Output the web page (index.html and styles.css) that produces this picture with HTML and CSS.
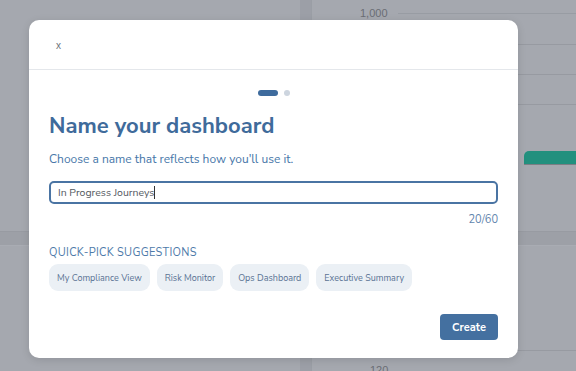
FILE: index.html
```html
<!DOCTYPE html>
<html>
<head>
<meta charset="utf-8">
<link rel="stylesheet" href="styles.css">
</head>
<body>
<div class="page">
  <div class="col-left">
    <div class="panel-top"></div>
    <div class="band"></div>
    <div class="panel-bottom"></div>
  </div>
  <div class="gutter"></div>
  <div class="col-right">
    <div class="panel-top chart">
      <div class="axis-row"><span class="axis-label">1,000</span><span class="axis-line"></span></div>
      <div class="grid-line l1"></div>
      <div class="grid-line l2"></div>
      <div class="grid-line l3"></div>
      <div class="bar"></div>
    </div>
    <div class="band"></div>
    <div class="panel-bottom chart2">
      <div class="grid-line l4"></div>
      <span class="axis-label small">120</span>
    </div>
  </div>
</div>
<div class="overlay">
  <div class="modal">
    <div class="modal-header"><span class="close">x</span></div>
    <div class="modal-body">
      <div class="steps"><span class="step active"></span><span class="step"></span></div>
      <h1 class="title">Name your dashboard</h1>
      <p class="subtitle">Choose a name that reflects how you'll use it.</p>
      <div class="input"><span class="input-text">In Progress Journeys</span><span class="caret"></span></div>
      <div class="counter">20/60</div>
      <div class="section-label">QUICK-PICK SUGGESTIONS</div>
      <div class="chips">
        <span class="chip">My Compliance View</span>
        <span class="chip">Risk Monitor</span>
        <span class="chip">Ops Dashboard</span>
        <span class="chip">Executive Summary</span>
      </div>
      <div class="actions"><button class="btn-create">Create</button></div>
    </div>
  </div>
</div>
</body>
</html>
```

FILE: styles.css
```css
* { box-sizing: border-box; }
html, body { margin: 0; padding: 0; }
body {
  width: 576px;
  height: 371px;
  overflow: hidden;
  position: relative;
  font-family: "Nunito Sans", "Lato", "Open Sans", sans-serif;
  background: #a4a7ae;
}
.page {
  display: flex;
  width: 576px;
  height: 371px;
}
.col-left { width: 300px; display: flex; flex-direction: column; }
.col-right { flex: 1; display: flex; flex-direction: column; border-left: 1px solid #9a9ea5; }
.gutter { width: 11px; background: #9c9fa7; }
.panel-top { height: 231px; background: #a5a8af; position: relative; }
.band { height: 14px; background: #9da0a7; border-top: 1px solid #989ba2; }
.panel-bottom { flex: 1; background: #a5a8af; position: relative; border-top: 1px solid #a9acb3; }
.chart .axis-row { display: flex; align-items: center; gap: 10px; padding: 7px 0 0 48px; }
.axis-label { font-family: "Liberation Sans", Arial, sans-serif; font-size: 11px; color: #6b6e75; }
.axis-line { flex: 1; height: 1px; background: #989ca3; }
.grid-line { position: absolute; left: 0; right: 0; height: 1px; background: #979aa1; }
.l1 { top: 44px; }
.l2 { top: 74px; }
.l3 { top: 104px; }
.l4 { top: 104px; }
.bar {
  position: absolute; left: 212px; right: 0; top: 151px; height: 14px;
  background: #22907e; border-radius: 5px 0 0 0;
  border-bottom: 1px solid #7b7e84;
}
.chart2 .small { position: absolute; left: 58px; top: 118px; }

.overlay {
  position: absolute; inset: 0;
  padding: 20px 0 0 29px;
}
.modal {
  width: 489px;
  height: 338px;
  background: #fff;
  border-radius: 10px;
  box-shadow: 0 2px 8px rgba(0,0,0,0.12);
  overflow: hidden;
}
.modal-header {
  height: 50px;
  border-bottom: 1px solid #e4e7eb;
  padding: 13px 0 0 27px;
}
.close { font-size: 10px; color: #6d727a; font-family: "Liberation Sans", Arial, sans-serif; }
.modal-body { padding: 19px 20px 0 20px; }
.steps { display: flex; justify-content: center; gap: 6px; align-items: center; height: 7px; }
.step { width: 6px; height: 6px; border-radius: 3px; background: #cdd5df; }
.step.active { width: 20px; background: #3e6b9d; }
.title {
  margin: 16px 0 0 0;
  font-size: 22px;
  font-weight: 700;
  color: #3f6b9b;
  line-height: 28px;
}
.subtitle {
  margin: 10px 0 0 0;
  font-size: 12px;
  color: #4877a9;
  line-height: 18px;
}
.input {
  margin-top: 13px;
  height: 23px;
  border: 2px solid #4a74a3;
  border-radius: 5px;
  display: flex; align-items: center;
  padding-left: 7px;
}
.input-text { font-size: 10.5px; color: #555a62; }
.caret { width: 1px; height: 13px; background: #333; }
.counter {
  margin-top: 8px;
  text-align: right;
  font-size: 11px;
  color: #5f84ad;
  line-height: 16px;
}
.section-label {
  margin-top: 17px;
  font-size: 11px;
  color: #4e7aa9;
  letter-spacing: 0.3px;
  line-height: 16px;
}
.chips { display: flex; gap: 7px; margin-top: 3px; }
.chip {
  height: 27px;
  padding: 0 8px;
  display: flex; align-items: center;
  background: #ebf0f5;
  border-radius: 9px;
  font-size: 9px;
  color: #5a7394;
}
.actions { display: flex; justify-content: flex-end; margin-top: 23px; }
.btn-create {
  width: 58px; height: 26px;
  border: none;
  border-radius: 4px;
  background: #4470a0;
  color: #fff;
  font-family: inherit;
  font-weight: 700;
  font-size: 11px;
  padding: 0;
}
```
